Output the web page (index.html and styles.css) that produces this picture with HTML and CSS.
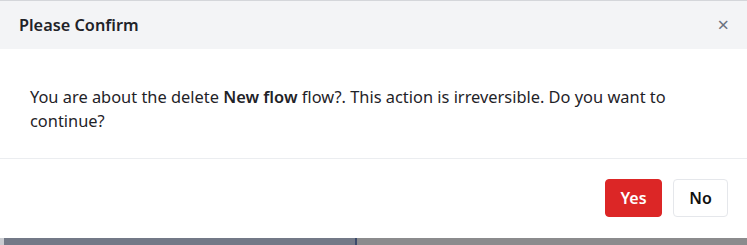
FILE: index.html
```html
<!DOCTYPE html>
<html>
<head>
<meta charset="utf-8">
<link rel="stylesheet" href="styles.css">
</head>
<body>
<div class="modal">
  <div class="modal-header">
    <span class="title">Please Confirm</span>
    <span class="close">&times;</span>
  </div>
  <div class="modal-body">
    <p class="msg">You are about the delete <b>New flow</b> flow?. This action is irreversible. Do you want to continue?</p>
  </div>
  <div class="modal-footer">
    <button class="btn btn-yes">Yes</button>
    <button class="btn btn-no">No</button>
  </div>
</div>
<div class="backdrop">
  <div class="bd-edge"></div>
  <div class="bd-left"></div>
  <div class="bd-right"></div>
</div>
</body>
</html>
```
FILE: styles.css
```css
html, body { margin: 0; padding: 0; }
body {
  width: 747px;
  height: 245px;
  overflow: hidden;
  font-family: "Noto Sans", "Open Sans", sans-serif;
  color: #1f2328;
  background: #fff;
}
.modal {
  height: 238px;
  display: flex;
  flex-direction: column;
  border-top: 1px solid #d4d6da;
  box-sizing: border-box;
}
.modal-header {
  height: 48px;
  background: #f3f4f6;
  display: flex;
  align-items: center;
  justify-content: space-between;
  padding: 0 18px 0 19px;
  box-sizing: border-box;
}
.title { font-size: 16.3px; font-weight: 600; color: #1f2328; }
.close { font-size: 20px; color: #6b7280; line-height: 1; }
.modal-body {
  padding: 36px 60px 0 30px;
  height: 110px;
  box-sizing: border-box;
  border-bottom: 1px solid #ebedf0;
}
.msg {
  margin: 0;
  font-size: 16.4px;
  line-height: 24px;
}
.msg b { font-weight: 600; }
.modal-footer {
  flex: 1;
  display: flex;
  justify-content: flex-end;
  align-items: center;
  gap: 11px;
  padding: 0 19px 2px 0;
}
.btn {
  height: 38px;
  font-family: inherit;
  font-size: 16px;
  font-weight: 600;
  border-radius: 4px;
  padding: 0;
}
.btn-yes {
  width: 57px;
  background: #dc2626;
  color: #fff;
  border: 1px solid #dc2626;
}
.btn-no {
  width: 55px;
  background: #fff;
  color: #111;
  border: 1px solid #e5e7eb;
}
.backdrop {
  height: 7px;
  display: flex;
}
.bd-edge { width: 4px; background: #c9cbd0; }
.bd-left { width: 351px; background: #737987; border-right: 2px solid #3b4a6b; }
.bd-right { flex: 1; background: #8b8b8d; }
```
